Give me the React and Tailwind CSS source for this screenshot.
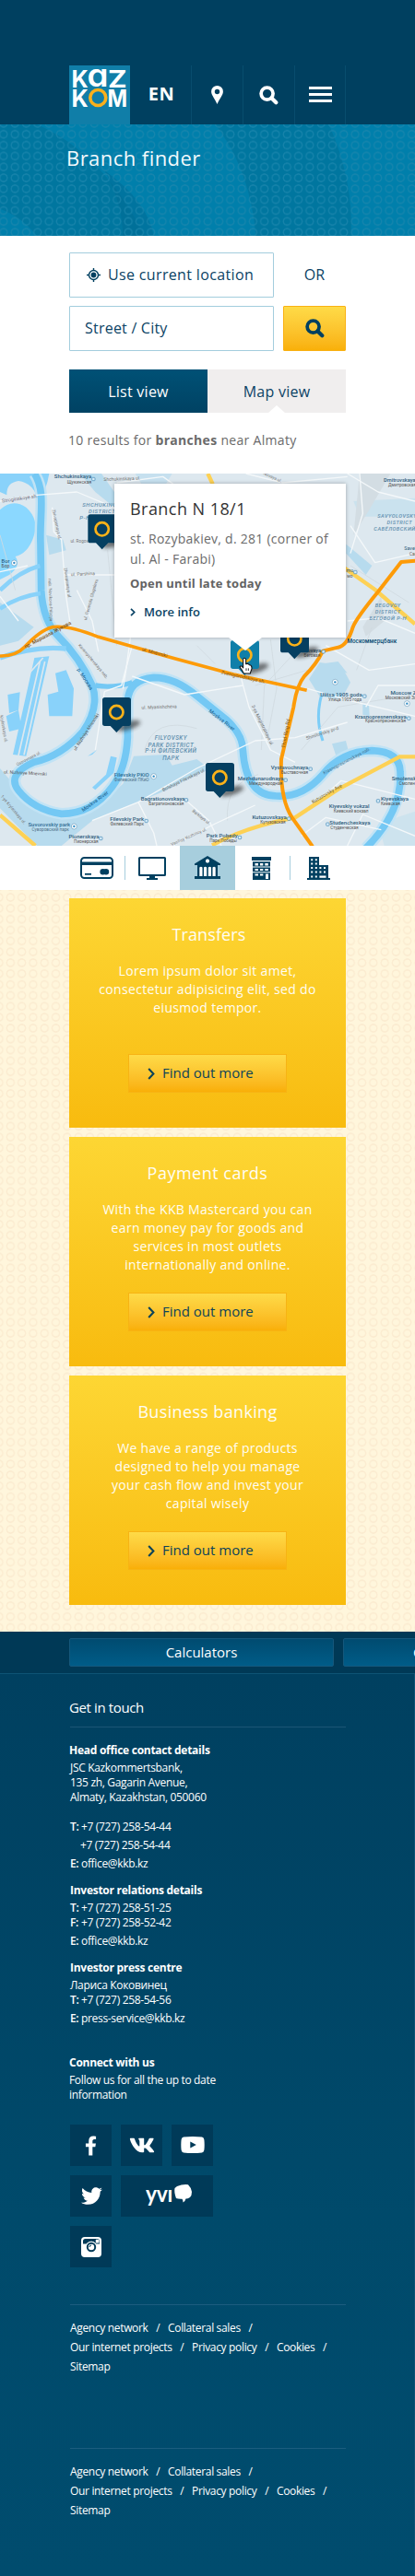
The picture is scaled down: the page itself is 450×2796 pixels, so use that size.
import React from "react";
import { FaFacebookF, FaVk, FaTwitter } from "react-icons/fa";

function SearchIcon({ className }) {
  return (
    <svg viewBox="0 0 21 21" className={className} fill="none" stroke="currentColor">
      <circle cx="8.6" cy="8.6" r="6.5" strokeWidth="3.7" />
      <path d="M13.5 13.5 L18.3 18.3" strokeWidth="4.2" strokeLinecap="round" />
    </svg>
  );
}

function Logo() {
  return (
    <svg viewBox="0 0 66 64" className="block h-16 w-[66px] shrink-0 bg-[#107ea8]">
      <g fill="#fff" fontFamily="Inter, sans-serif" fontWeight="700" fontSize="25.6">
        <text x="2.4" y="23.6" textLength="18.2" lengthAdjust="spacingAndGlyphs">K</text>
        <text x="19.6" y="23.4" fontWeight="600" fontSize="33.5" textLength="23" lengthAdjust="spacingAndGlyphs">ɑ</text>
        <text x="42" y="23.6" textLength="20.6" lengthAdjust="spacingAndGlyphs">Z</text>
        <text x="2.4" y="44.6" textLength="18.2" lengthAdjust="spacingAndGlyphs">K</text>
        <text x="41.6" y="44.6" textLength="21.6" lengthAdjust="spacingAndGlyphs">M</text>
      </g>
      <circle cx="31.3" cy="35" r="8.5" fill="none" stroke="#f9b01c" strokeWidth="3.6" />
    </svg>
  );
}

function Header() {
  const cell = "flex h-16 items-center justify-center border-r border-[#084d6e]";
  return (
    <header className="flex h-[135px] items-end bg-[#004060] pl-[75px] text-white">
      <Logo />
      <div className={cell + " w-[67px] pb-[3px] pl-[2px] text-[20px] font-bold tracking-[0.4px]"}>EN</div>
      <div className={cell + " w-14"}>
        <svg viewBox="0 0 13 20" className="mb-px h-5 w-[13px]" fill="currentColor">
          <path fillRule="evenodd" d="M6.5 0 A6.4 6.4 0 0 1 12.9 6.4 C12.9 10 8.6 15 6.5 20 C4.4 15 .1 10 .1 6.4 A6.4 6.4 0 0 1 6.5 0 Z M6.5 3.8 A2.7 2.7 0 1 0 6.5 9.2 A2.7 2.7 0 1 0 6.5 3.8 Z" />
        </svg>
      </div>
      <div className={cell + " w-14"}>
        <SearchIcon className="h-[21px] w-[21px]" />
      </div>
      <div className={cell + " w-[55px] flex-col gap-[4px] pb-[2px]"}>
        <span className="h-[3px] w-[25px] bg-white" />
        <span className="h-[3px] w-[25px] bg-white" />
        <span className="h-[3px] w-[25px] bg-white" />
      </div>
    </header>
  );
}

function Banner() {
  return (
    <section className="relative h-[121px] bg-[#00769f]">
      <svg viewBox="0 0 1350 363" className="absolute inset-0 h-full w-full">
        <g fill="#0083b1" opacity=".7">
          <path d="M120 0 C260 60 380 180 470 363 H832 C820 210 770 90 700 0Z" />
          <path d="M1070 0 Q1150 180 1142 363 H1350 V0Z" />
          <path d="M0 275 Q70 300 120 363 H0Z" />
        </g>
        <path d="M340 150 Q480 250 500 363 H400 Q400 260 340 150Z" fill="#006a93" opacity=".5" />
      </svg>
      <div className="absolute inset-0 bg-[radial-gradient(circle,transparent_3px,#1c86ad_3.6px,#1c86ad_4.4px,transparent_5px)] bg-[length:12.3px_11.83px] bg-[position:10px_4.8px] opacity-80" />
      <h1 className="relative pl-[72px] pt-[21px] text-[22px] font-normal leading-[30px] tracking-[0.45px] text-[#f2f9fc]">Branch finder</h1>
    </section>
  );
}

function Finder() {
  const box = "flex h-[49px] w-[222px] items-center rounded-[1px] border border-[#a3cddd] text-[16px] text-[#0b4365]";
  return (
    <section className="h-[258px] bg-white px-[75px] pt-[18px]">
      <div className="flex">
        <div className={box + " pb-px pl-[18px] tracking-[0.35px]"}>
          <svg viewBox="0 0 15 15" className="h-[15px] w-[15px]" fill="none" stroke="#004060" strokeWidth="1.4">
            <circle cx="7.5" cy="7.5" r="5" />
            <path d="M7.5 0V2.6M7.5 12.4V15M0 7.5H2.6M12.4 7.5H15" />
            <circle cx="7.5" cy="7.5" r="2.9" fill="#004060" stroke="none" />
          </svg>
          <span className="ml-[8px]">Use current location</span>
        </div>
        <div className="ml-[10px] flex w-[68px] items-center justify-center pb-px text-[16px] text-[#0b4365]">OR</div>
      </div>
      <div className="mt-[9px] flex">
        <div className={box + " pb-[2px] pl-[16px] tracking-[0.22px]"}>Street / City</div>
        <div className="ml-[10px] flex h-[49px] w-[68px] items-center justify-center rounded-[1px] border border-[#f9b113] bg-linear-to-b from-[#fedb47] to-[#f9b007] text-[#004060]">
          <SearchIcon className="h-[21px] w-[21px]" />
        </div>
      </div>
      <div className="mt-5 flex text-[16px] tracking-[0.25px]">
        <div className="flex h-[47px] w-[150px] items-center justify-center bg-linear-to-b from-[#005176] to-[#004263] text-white">List view</div>
        <div className="relative flex h-[47px] w-[150px] items-center justify-center bg-[#f0eeee] text-[#0b4365]">
          Map view
          <span className="absolute bottom-0 left-[66px] h-2 w-[18px] bg-white [clip-path:polygon(50%_0,100%_100%,0_100%)]" />
        </div>
      </div>
      <p className="-ml-px mt-5 whitespace-nowrap text-[14px] leading-5 tracking-[0.31px] text-[#6a6a6a]">
        10 results for <b className="font-bold">branches</b> near Almaty
      </p>
    </section>
  );
}

function Pin({ x, y, color = "#053f61" }) {
  return (
    <g transform={`translate(${x} ${y})`}>
      <ellipse cx="85" cy="92" rx="40" ry="13" transform="rotate(-18 85 92)" fill="#222" opacity=".6" filter="url(#soft)" />
      <path d="M8 0H85Q93 0 93 8V85Q93 93 85 93H66L46 114L26 93H8Q0 93 0 85V8Q0 0 8 0Z" fill={color} />
      <circle cx="46" cy="48" r="21.5" fill="none" stroke="#fbb219" strokeWidth="8" />
    </g>
  );
}

const RIVER =
  "M112 0 C150 60 128 130 132 230 L134 380 Q140 480 190 530 Q260 600 300 690 Q325 760 270 840 Q200 920 110 940 Q20 980 60 1032 Q110 1095 200 1108 Q300 1108 365 1020 Q410 960 415 860 V740 Q420 670 500 664 Q570 664 640 724 L735 800 Q790 850 790 900 Q800 1050 900 1050 Q985 1055 1050 980 Q1110 905 1210 902 Q1300 905 1302 970 Q1310 1100 1190 1220";

const THIN_ROADS = [
  "M0 90 L120 70 L250 60 L370 110", "M0 320 L90 300", "M170 110 L175 190 L200 215 L215 400 L230 500", "M215 330 L372 330",
  "M430 560 L395 690 L340 710 L310 900", "M430 660 L600 720 L790 690", "M430 490 L410 640 L400 700", "M780 650 L810 760 L880 900 L960 940",
  "M450 1070 L640 960 L830 870 L960 860 L1130 810", "M450 1070 L500 1170 L510 1212", "M300 1130 L450 1070", "M560 1212 L700 1140 L830 1080",
  "M600 1060 L680 1130 L720 1212", "M1130 0 L1230 60 L1350 90", "M1140 170 L1220 290 L1350 260", "M1130 480 L1230 470 L1350 520",
  "M1000 700 L1140 740 L1350 790", "M1060 560 L1200 640 L1350 620", "M1190 760 L1230 690 L1350 690", "M1000 1100 L1110 1000 L1350 1060",
  "M1130 1212 L1180 1110 L1350 1180", "M980 1180 L1060 1120 L1240 1160",
  "M380 30 L530 10 L600 60", "M800 0 L920 30 L1130 10", "M1170 0 L1180 130 L1140 260", "M0 400 L60 480", "M250 380 L300 480 L320 580",
];

const LABELS = [
  [237, 14, "Shchukinskaya", "#2f5d7d", 18], [258, 32, "Щукинская", "#555", 15], [397, 20, "Shchukinskaya ul.", "#777", 15, -2],
  [65, 84, "Stroginskoye sh.", "#667", 16, -8], [324, 105, "SHCHUKINO", "#5f8fae", 18, 0, 1], [332, 127, "DISTRICT", "#5f8fae", 18, 0, 1], [276, 148, "Р-Н", "#5f8fae", 18, 0, 1],
  [262, 222, "ul. Rogova", "#777", 14], [18, 288, "Bor", "#2f5d7d", 17], [18, 304, "Бор", "#555", 15], [270, 330, "ul. Parshina", "#777", 15, -3],
  [180, 165, "Zhivopisnaya ul.", "#777", 14, 78], [215, 355, "Zhivopisnaya ul.", "#777", 14, 82], [160, 410, "nab. Novikova-Priboya", "#777", 14, 88], [300, 410, "ul. Generala Glagoleva", "#777", 14, -74],
  [885, 14, "Novaya ul.", "#777", 14, 24], [1300, 24, "Dmitrovskaya", "#2f5d7d", 17], [1308, 40, "Дмитровская", "#555", 14],
  [1292, 141, "SAVYOLOVSKY", "#5f8fae", 17, 0, 1], [1300, 162, "DISTRICT", "#5f8fae", 17, 0, 1], [1284, 184, "САВЁЛОВСКИЙ", "#5f8fae", 17, 0, 1], [1334, 248, "Savel", "#2f5d7d", 16], [1344, 264, "Сав", "#555", 14],
  [1262, 433, "BEGOVOY", "#5f8fae", 17, 0, 1], [1262, 455, "DISTRICT", "#5f8fae", 17, 0, 1], [1262, 476, "БЕГОВОЙ Р-Н", "#5f8fae", 17, 0, 1],
  [1138, 320, "mo", "#2f5d7d", 16], [1138, 336, "мо", "#555", 14], [1210, 549, "Москоммерцбанк", "#064a72", 19], [1022, 580, "ovaya", "#2f5d7d", 17], [1015, 596, "Беговая", "#555", 14],
  [158, 528, "пр. Маршала Жукова", "#7a5320", 17, -28], [502, 586, "ul. Mnevniki", "#7a5320", 16, 15], [790, 666, "Zvenigorodskoye sh.", "#7a5320", 16, 12],
  [300, 612, "Karamyshevskaya nab.", "#777", 14, 50], [272, 670, "р. Москва", "#2a6f9c", 17, 58], [518, 763, "ul. Myasishcheva", "#777", 15, -2],
  [285, 842, "ul. Nizhniye Mnevniki", "#555", 15, -57], [8, 830, "Krylatskaya ul.", "#777", 14, 80], [95, 930, "Ostrovnaya ul.", "#777", 14, -28], [82, 978, "ul. Nizhniye Mnevniki", "#555", 15, 3],
  [718, 805, "Moskva River", "#2a6f9c", 17, 38], [556, 866, "FILYOVSKY", "#5f8fae", 19, 0, 1], [556, 888, "PARK DISTRICT", "#5f8fae", 19, 0, 1], [556, 908, "Р-Н ФИЛЕВСКИЙ", "#5f8fae", 19, 0, 1], [556, 930, "ПАРК", "#5f8fae", 19, 0, 1],
  [428, 985, "Filevskiy PKiO", "#2f6d94", 18], [428, 1000, "Филевский ПКиО", "#4f6f86", 14], [600, 1000, "Bolshaya Filevskaya ul.", "#666", 15, -26], [530, 1062, "Bagrationovskaya", "#2f5d7d", 18], [541, 1077, "Багратионовская", "#555", 14],
  [312, 1070, "Moskva River", "#2a6f9c", 17, -36], [413, 1130, "Filevskiy Park", "#2f5d7d", 18], [413, 1145, "Филевский Парк", "#555", 14], [160, 1147, "Suvorovskiy park", "#2f6d94", 18], [164, 1163, "Суворовский парк", "#4f6f86", 14],
  [273, 1186, "Pionerskaya", "#2f5d7d", 18], [280, 1202, "Пионерская", "#555", 14], [652, 1120, "Barklaya ul.", "#777", 14, 38], [616, 1185, "Vasilisy Kozhinoy ul.", "#777", 14, -24], [722, 1183, "Park Pobedy", "#2f5d7d", 18], [726, 1198, "Парк Победы", "#555", 14],
  [40, 1095, "1-ya Krylatskaya ul.", "#777", 14, 50], [850, 820, "3-ya Magistralnaya ul.", "#666", 15, 64], [935, 845, "Third Ring Rd", "#7a5320", 16, -80], [942, 961, "Vystavochnaya", "#2f5d7d", 18], [958, 975, "Выставочная", "#555", 14],
  [848, 996, "Mezhdunarodnaya", "#2f5d7d", 18], [864, 1011, "Международная", "#555", 14], [876, 1122, "Kutuzovskaya", "#2f5d7d", 18], [888, 1137, "Кутузовская", "#555", 14], [1066, 1045, "Kutuzovsky Ave", "#7a6320", 16, -30],
  [1110, 724, "Ulitsa 1905 goda", "#2f5d7d", 18], [1122, 740, "Улица 1905 года", "#555", 14], [1312, 718, "Moscow Z", "#2f5d7d", 18], [1304, 733, "Московский Зо", "#555", 14], [1238, 795, "Krasnopresnenskaya", "#2f5d7d", 18], [1254, 809, "Краснопресненская", "#555", 14],
  [1050, 848, "Shmitovskiy pr-d", "#777", 15, -18], [1130, 938, "Krasnopresnenskaya nab.", "#3c6d8c", 15, -28], [1314, 997, "Smolensk", "#2f5d7d", 18], [1324, 1012, "Смолен", "#555", 14],
  [1284, 1064, "Kiyevskaya", "#2f5d7d", 18], [1270, 1079, "Киевская", "#555", 14], [1136, 1087, "Kiyevskiy vokzal", "#2f5d7d", 18], [1142, 1102, "Киевский вокзал", "#555", 14], [1138, 1141, "Studencheskaya", "#2f5d7d", 18], [1120, 1156, "Студенческая", "#555", 14],
];

function MapArt() {
  return (
    <svg viewBox="0 0 1350 1212" className="block h-full w-full" fill="none" strokeLinejoin="round">
      <defs>
        <filter id="soft" x="-50%" y="-100%" width="200%" height="300%">
          <feGaussianBlur stdDeviation="7" />
        </filter>
      </defs>
      <rect width="1350" height="1212" fill="#dde8ef" />
      <g fill="#b7dbee">
        <path d="M435 920 L540 915 L560 950 L640 930 L680 960 L520 1040 L300 1130 L200 1212 H120 L0 1090 V960 L60 1030 L200 1110 L300 1100 L400 1010Z" />
        <path d="M1040 615 L1110 625 L1140 680 L1110 735 L1040 725 L1005 670Z" />
        <path d="M0 420 L110 500 L60 545 L0 560Z" />
        <path d="M260 0 L330 0 L372 60 V110 L310 60Z" />
        <path d="M150 200 L205 215 L215 250 L160 265Z" />
        <path d="M1150 90 L1350 80 V140 H1170Z" opacity=".5" />
        <path d="M1040 620 L1100 612 L1130 650Z" />
        <path d="M1126 260 L1190 330 L1210 300 L1126 230Z" />
        <path d="M1180 750 L1200 752 L1202 790 L1180 785Z" />
        <path d="M440 0 L560 0 L540 34 L460 34Z" opacity=".6" />
        <path d="M1230 1140 L1350 1100 V1212 H1250Z" opacity=".4" />
        <path d="M1080 880 L1125 870 L1135 910 L1095 925Z" />
      </g>
      <path d="M1170 0 L1270 0 L1200 120 L1150 200Z M1180 500 L1240 400 L1250 480 L1190 530Z" fill="#d3dde3" />
      <g fill="#89d2fa">
        <path d="M0 118 Q40 80 85 110 Q130 150 108 210 Q90 260 50 270 Q70 300 30 330 L0 345Z" fill="#8bd8ff" />
        <path d="M0 0 H160 Q150 60 125 90 Q110 30 60 24 Q20 30 22 70 L0 60Z" />
        <path d="M112 600 L160 595 L85 920 L42 915Z" />
        <path d="M25 720 L65 712 L60 770 L30 780Z M180 650 L215 640 L240 700 L235 790 L160 790 L155 720 L190 710Z M20 790 L60 770 L70 830 L30 840Z" />
        <path d="M300 1022 L345 980 L360 920 L380 925 L370 975 L310 1030Z M285 920 L315 900 L300 915Z" />
      </g>
      <path d="M60 690 L140 600 M130 612 L60 918 M146 612 L78 916" stroke="#dde8ef" strokeWidth="5" />
      <path d={RIVER} stroke="#c1e3f5" strokeWidth="38" />
      <path d={RIVER} stroke="#74c8f4" strokeWidth="23" />
      <path d="M132 390 Q60 400 0 440 M130 300 Q60 320 0 380" stroke="#89d2fa" strokeWidth="14" />
      <path d="M310 690 Q370 700 430 680" stroke="#74c8f4" strokeWidth="16" />
      <path d="M215 570 Q110 560 0 600" stroke="#89d2fa" strokeWidth="16" />
      <path d="M1045 725 Q1025 800 1050 870" stroke="#7ccdf7" strokeWidth="9" />
      <g stroke="#d0dae0" strokeWidth="2.5">
        <path d="M440 100 L520 520 M350 250 L380 560 M980 560 L860 690 L850 900 M830 690 L1000 640 M640 560 L700 620 M0 200 L50 380 M1210 500 L1160 640 M880 540 L900 700 L870 860" />
        <path d="M470 900 Q500 790 640 830 M740 1130 Q730 1010 840 980 M980 900 L1100 760 L1340 720 M1140 300 L1330 420" />
      </g>
      {THIN_ROADS.map((d) => (
        <path key={d} d={d} stroke="#f4f8fa" strokeWidth="4" />
      ))}
      <path d="M1110 300 L1220 378 L1350 490 M690 1210 Q800 1150 960 1120 L1100 1028 L1300 922 H1350 M0 1112 L115 1212 M676 0 L692 34" stroke="#fdd155" strokeWidth="13" />
      <path d="M0 594 Q50 596 80 565 Q130 510 170 500 Q220 492 320 532 L560 600 L760 654 L998 706" stroke="#fd9b08" strokeWidth="11" />
      <path d="M1350 284 L1305 288 L1230 385 Q1160 470 1148 500 Q1130 560 1100 566 L1050 578 Q1030 620 990 660 Q965 690 955 760 L915 930 Q910 1060 950 1120 L1015 1212" stroke="#fd9b08" strokeWidth="12" strokeLinecap="round" />
      <g fontFamily="Roboto, sans-serif" textAnchor="middle">
        {LABELS.map(([x, y, t, c, s, r, area], i) => (
          <text key={i} transform={`translate(${x} ${y + 2}) rotate(${r || 0})`} fill={c} fontSize={s} fontWeight={s > 16 ? 500 : 400} fontStyle={area ? "italic" : "normal"} letterSpacing={area ? 1.5 : 0}>
            {t}
          </text>
        ))}
      </g>
      {[[46, 291], [500, 986], [241, 1149], [1090, 679], [1324, 749]].map(([x, y]) => (
        <g key={x}>
          <circle cx={x} cy={y} r="9" fill="#fff" stroke="#6d9dbd" strokeWidth="2" />
          <circle cx={x} cy={y} r="3.5" fill="#2f8bc4" />
        </g>
      ))}
      {[[304, 18], [1156, 321], [1052, 580], [1186, 725], [1330, 797], [606, 1063], [476, 1131], [328, 1188], [780, 1185], [1010, 962], [929, 998], [940, 1124], [1230, 1066], [1066, 1142]].map(([x, y]) => (
        <rect key={x} x={x - 5} y={y - 5} width="10" height="10" rx="2" fill="#d6ecfa" stroke="#3f86b4" strokeWidth="2" />
      ))}
      <Pin x={286} y={133} />
      <Pin x={912} y={490} />
      <Pin x={333} y={729} />
      <Pin x={669} y={942} />
      <Pin x={750} y={543} color="#0f7fa9" />
      <path d="M791 607 Q791 601 795 601 Q800 601 800 607 V620 Q808 617 811 623 Q819 623 819 632 V636 Q816 643 814 651 H793 Q788 640 781 632 Q779 626 786 627 L791 633Z" fill="#fff" stroke="#111" strokeWidth="3.2" />
      <path d="M801 634V642M808 634V642" stroke="#111" strokeWidth="2.5" />
    </svg>
  );
}

function BranchMap() {
  return (
    <section className="relative h-[404px] overflow-hidden">
      <MapArt />
      <article className="absolute left-[124px] top-[11px] h-[167px] w-[251px] whitespace-nowrap bg-white pl-[17px] pt-[15px] shadow-[0_0_4px_rgba(0,0,0,0.3)]">
        <h2 className="text-[18px] font-normal leading-6 tracking-[0.45px] text-[#333]">Branch N 18/1</h2>
        <p className="mt-[10px] text-[14px] leading-[22px] tracking-[0.26px] text-[#6b6b6b]">
          st. Rozybakiev, d. 281 (corner of
          <br />
          ul. Al - Farabi)
        </p>
        <p className="mt-[5px] text-[13px] font-bold leading-5 tracking-[0.22px] text-[#636363]">Open until late today</p>
        <a className="mt-[11px] flex items-center text-[13px] font-semibold leading-5 text-[#0b4365]">
          <svg viewBox="0 0 6 9" className="mr-[9px] mt-px h-[9px] w-[6px]" fill="none" stroke="currentColor" strokeWidth="1.7">
            <path d="M1 .8L4.7 4.5L1 8.2" />
          </svg>
          More info
        </a>
        <span className="absolute -bottom-[14px] left-[124px] h-[14px] w-[36px] bg-white [clip-path:polygon(0_0,100%_0,50%_100%)]" />
      </article>
    </section>
  );
}

function Categories() {
  return (
    <nav className="flex h-12 bg-white pl-[75px] text-[#004060]">
      <div className="flex w-[60px] items-center justify-end">
        <svg viewBox="0 0 36 24" className="mr-[12px] h-6 w-9" fill="none" stroke="currentColor">
          <rect x="1" y="1" width="34" height="22" rx="3.5" strokeWidth="2" />
          <path d="M1 7.2H35" strokeWidth="3.6" />
          <path d="M5 18.8H12" strokeWidth="1.8" />
          <circle cx="24.6" cy="16.3" r="3.2" fill="currentColor" stroke="none" />
          <circle cx="28" cy="16.3" r="3.2" fill="currentColor" stroke="none" />
        </svg>
      </div>
      <div className="flex w-[60px] items-center">
        <span className="h-[26px] w-px bg-[#a6cddd]" />
        <svg viewBox="0 0 30 25" className="ml-[14px] h-[25px] w-[30px]" fill="currentColor">
          <path fillRule="evenodd" d="M1.5 0H28.5Q30 0 30 1.5V19.5Q30 21 28.5 21H1.5Q0 21 0 19.5V1.5Q0 0 1.5 0ZM2 2V19H28V2Z" />
          <path d="M12 21H18V23H21V25H9V23H12Z" />
        </svg>
      </div>
      <div className="flex w-[60px] items-center justify-center bg-[#a7cedd]">
        <svg viewBox="0 0 28 25" className="mb-px h-[25px] w-7" fill="currentColor">
          <path fillRule="evenodd" d="M14 0L28 8.6V10H0V8.6ZM14 3.4A2 2 0 1 0 14 7.5A2 2 0 1 0 14 3.4Z" />
          <path d="M3 10H25V22H28V25H0V22H3Z" />
          <path d="M5.3 12.5Q6.9 10.8 8.5 12.5V22H5.3ZM10 12.5Q11.6 10.8 13.2 12.5V22H10ZM14.8 12.5Q16.4 10.8 18 12.5V22H14.8ZM19.5 12.5Q21.1 10.8 22.7 12.5V22H19.5Z" fill="#fff" />
          <circle cx="14" cy="5.4" r="2" fill="#fff" />
        </svg>
      </div>
      <div className="flex w-[60px] items-center">
        <svg viewBox="0 0 21 25" className="ml-[18px] mt-px h-[25px] w-[21px]" fill="currentColor">
          <path d="M0 0H21V4H0ZM1 5H20V25H1Z" />
          <path d="M1 4H20V5.2H1ZM3.5 7H7V9.6H3.5ZM9 7H12.3V9.6H9ZM14.3 7H17.8V9.6H14.3ZM1 10.6H20V11.6H1ZM3.5 13H7V15H3.5ZM9 13H12.3V15H9ZM14.3 13H17.8V15H14.3ZM1 16.2H20V17.2H1ZM3.5 18.4H7V20.4H3.5ZM9 18.4H12.3V20.4H9ZM15 18.4H18V24H15Z" fill="#fff" />
        </svg>
      </div>
      <div className="flex w-[60px] items-center">
        <span className="-ml-px h-[26px] w-px bg-[#a6cddd]" />
        <svg viewBox="0 0 25 25" className="ml-[18px] mt-px h-[25px] w-[25px]" fill="currentColor">
          <path d="M2 0H13V9H23V23H25V25H0V23H2Z" />
          <path d="M4.2 2.2H6.2V4.2H4.2ZM8.8 2.2H10.8V4.2H8.8ZM4.2 6.6H6.2V8.6H4.2ZM8.8 6.6H10.8V8.6H8.8ZM4.2 11H6.2V13H4.2ZM8.8 11H10.8V13H8.8ZM13.4 11H15.4V13H13.4ZM18 11H20V13H18ZM4.2 15.6H6.2V17.6H4.2ZM8.8 15.6H10.8V17.6H8.8ZM13.4 15.6H15.4V17.6H13.4ZM18 15.6H20V17.6H18ZM4.2 20.4H6.2V22.6H4.2ZM8.8 20.4H10.8V22.6H8.8ZM13.4 20.6H20.5V22.8H13.4Z" fill="#fff" />
        </svg>
      </div>
    </nav>
  );
}

function OfferCard({ title, titleClass, lines }) {
  return (
    <article className="flex h-[249px] flex-col items-center bg-linear-to-b from-[#fdd633] via-[#fac61e] via-60% to-[#f8bb0e] pt-[26px] text-center text-[#fffdf5]">
      <h3 className={"text-[18px] font-normal leading-[26px] " + titleClass}>{title}</h3>
      <p className="mt-[17px] h-[100px] whitespace-nowrap text-[14px] leading-5 tracking-[0.32px]">
        {lines.map((l) => (
          <span key={l} className="block">{l}</span>
        ))}
      </p>
      <a className="flex h-[42px] w-[172px] shrink-0 items-center border border-[#f7b314] bg-linear-to-b from-[#fedb47] to-[#f9af06] pb-px pl-[20px] text-[15px] text-[#0d4358]">
        <svg viewBox="0 0 8 13" className="mr-[8px] mt-px h-[13px] w-2" fill="none" stroke="currentColor" strokeWidth="2.1">
          <path d="M1.2 1L6.4 6.5L1.2 12" />
        </svg>
        Find out more
      </a>
    </article>
  );
}

function Offers() {
  return (
    <section className="h-[805px] bg-[#fff6dc] bg-[radial-gradient(circle,transparent_2.9px,#fbebd0_3.6px,#fbebd0_4.4px,transparent_5px)] bg-[length:12.3px_11.83px] bg-[position:5.2px_2.1px] px-[75px] pt-[9px]">
      <div className="flex flex-col gap-[10px]">
        <OfferCard title="Transfers" titleClass="pl-[3px] tracking-[0.1px]" lines={["Lorem ipsum dolor sit amet,", "consectetur adipisicing elit, sed do", "eiusmod tempor."]} />
        <OfferCard title="Payment cards" titleClass="tracking-[0.5px]" lines={["With the KKB Mastercard you can", "earn money pay for goods and", "services in most outlets", "internationally and online."]} />
        <OfferCard title="Business banking" titleClass="tracking-[0.35px]" lines={["We have a range of products", "designed to help you manage", "your cash flow and invest your", "capital wisely"]} />
      </div>
    </section>
  );
}

function ToolsStrip() {
  const tab = "flex h-[31px] w-[287px] shrink-0 items-center rounded-[2px] border border-[#15587c] bg-linear-to-b from-[#004b70] to-[#005c88] text-[15px] text-white";
  return (
    <div className="flex h-[45px] gap-[10px] overflow-hidden bg-[#003956] pl-[75px] pt-[7px]">
      <div className={tab + " justify-center"}>Calculators</div>
      <div className={tab + " pl-[75px]"}>C</div>
    </div>
  );
}

function Contact({ label, children, className = "" }) {
  return (
    <div className={"flex " + className}>
      <span className="w-[12px] font-semibold">{label}</span>
      <span>{children}</span>
    </div>
  );
}

function Links() {
  const rows = [["Agency network", "Collateral sales"], ["Our internet projects", "Privacy policy", "Cookies"], ["Sitemap"]];
  return (
    <div className="border-t border-[#1c5d7f] pt-[14px]">
      {rows.map((row, i) => (
        <div key={i} className="flex h-[21px] whitespace-nowrap leading-[21px]">
          {row.map((t) => (
            <React.Fragment key={t}>
              <span>{t}</span>
              {i < 2 && <span className="mx-[8.7px]">/</span>}
            </React.Fragment>
          ))}
        </div>
      ))}
    </div>
  );
}

function Socials() {
  const tile = "flex h-[45px] items-center justify-center bg-[#003a58]";
  return (
    <div className="mt-6 grid w-[155px] grid-cols-3 gap-[10px] text-white">
      <div className={tile}>
        <FaFacebookF className="h-[22px] w-[13px]" />
      </div>
      <div className={tile}>
        <FaVk className="h-[27px] w-[28px]" />
      </div>
      <div className={tile}>
        <svg viewBox="0 0 26 18" className="mb-px h-[18px] w-[26px]" fill="currentColor">
          <path fillRule="evenodd" d="M3 .6Q13 -.5 23 .6Q25.2 1 25.4 3.4Q26 9 25.4 14.6Q25.2 17 23 17.4Q13 18.5 3 17.4Q.8 17 .6 14.6Q0 9 .6 3.4Q.8 1 3 .6ZM10.3 5.6V12.4L16.8 9Z" />
        </svg>
      </div>
      <div className={tile}>
        <FaTwitter className="ml-[2px] h-[23px] w-[23px]" />
      </div>
      <div className={tile + " col-span-2"}>
        <svg viewBox="0 0 50 26" className="mb-px ml-[4px] h-[26px] w-[50px]" fill="#fff">
          <text x="0" y="19.5" fontFamily="Lato, sans-serif" fontWeight="700" fontSize="24" textLength="29" lengthAdjust="spacingAndGlyphs">yvı</text>
          <path d="M34 3Q40 .5 46 1.2Q49 4 50 9Q50 13 48 15Q45.500 16.500 43.500 16.500Q43 19 40.500 20.500Q40.500 18 39.500 16.800Q35 17 33 16Q30.500 9 31.500 5Z" />
        </svg>
      </div>
      <div className={tile}>
        <svg viewBox="0 0 22 22" className="ml-px h-[22px] w-[22px]">
          <rect width="22" height="22" rx="4" fill="#fff" />
          <path d="M2 7.500V4.500Q2 2 4.500 2H17.500Q20 2 20 4.500V7.500H16Q14 4.800 11 4.800Q8 4.800 6 7.500Z" fill="#003a58" />
          <rect x="15.800" y="2.800" width="3.700" height="3.700" rx=".6" fill="#fff" />
          <circle cx="11" cy="11" r="6.200" fill="#fff" />
          <circle cx="11" cy="11" r="4.200" fill="none" stroke="#003a58" strokeWidth="2" />
          <path d="M9 11A2 2 0 0 1 11 9" fill="none" stroke="#003a58" strokeWidth="1" />
        </svg>
      </div>
    </div>
  );
}

function Footer() {
  const head = "h-4 font-bold leading-4 tracking-[-0.27px]";
  return (
    <footer className="h-[980px] border-r border-t border-[#0d5375] bg-linear-to-b from-[#004060] via-[#004a6b] via-60% to-[#004c6e] pl-[76px] pr-[74px] pt-[26px] text-[12px] leading-4 tracking-[-0.33px] text-white">
      <h2 className="-ml-px h-[20px] text-[15px] leading-5 tracking-[-0.38px]">Get in touch</h2>
      <div className="mt-[11px] h-px bg-[#1c5575]" />
      <h3 className={head + " -ml-px mt-[17px]"}>Head office contact details</h3>
      <p className="mt-[3px]">JSC Kazkommertsbank,<br />135 zh, Gagarin Avenue,<br />Almaty, Kazakhstan, 050060</p>
      <div className="mt-[14px] leading-5">
        <Contact label="T:">+7 (727) 258-54-44</Contact>
        <Contact>
          <span className="-ml-px">+7 (727) 258-54-44</span>
        </Contact>
        <Contact label="E:">office@kkb.kz</Contact>
      </div>
      <h3 className={head + " mt-[11px]"}>Investor relations details</h3>
      <Contact className="mt-[3px]" label="T:">+7 (727) 258-51-25</Contact>
      <Contact label="F:">+7 (727) 258-52-42</Contact>
      <Contact className="mt-1" label="E:">office@kkb.kz</Contact>
      <h3 className={head + " mt-[13px]"}>Investor press centre</h3>
      <p className="mt-[3px]">Лариса Коковинец</p>
      <Contact label="T:">+7 (727) 258-54-56</Contact>
      <Contact className="mt-1" label="E:">press-service@kkb.kz</Contact>
      <h3 className={head + " -ml-px mt-[32px]"}>Connect with us</h3>
      <p className="-ml-px mt-[3px]">Follow us for all the up to date<br />information</p>
      <Socials />
      <div className="mt-10">
        <Links />
      </div>
      <div className="mt-[78px]">
        <Links />
      </div>
    </footer>
  );
}

export default function App() {
  return (
    <div className="w-[450px] overflow-hidden bg-white font-['Open_Sans','Noto_Sans',sans-serif]">
      <Header />
      <Banner />
      <Finder />
      <BranchMap />
      <Categories />
      <Offers />
      <ToolsStrip />
      <Footer />
    </div>
  );
}
